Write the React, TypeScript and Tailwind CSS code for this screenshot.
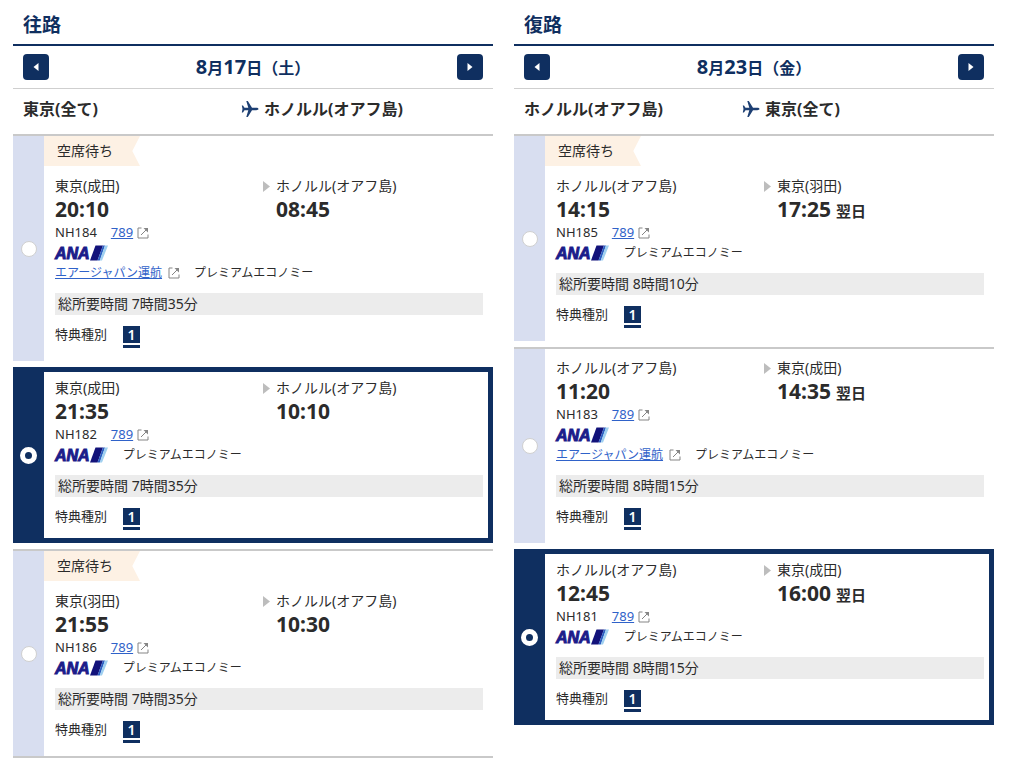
import { useState } from "react";

type Flight = {
  no: string;
  waitlist?: boolean;
  from: string;
  dep: string;
  to: string;
  arr: string;
  nextDay?: boolean;
  operator?: string;
  duration: string;
};

type Leg = {
  title: string;
  date: [string, string, string];
  from: string;
  to: string;
  flights: Flight[];
  initial: string;
  closed?: boolean;
};

const HNL = "ホノルル(オアフ島)";

const legs: Leg[] = [
  {
    title: "往路",
    date: ["8", "17", "土"],
    from: "東京(全て)",
    to: HNL,
    initial: "NH182",
    closed: true,
    flights: [
      { no: "NH184", waitlist: true, from: "東京(成田)", dep: "20:10", to: HNL, arr: "08:45", operator: "エアージャパン運航", duration: "7時間35分" },
      { no: "NH182", from: "東京(成田)", dep: "21:35", to: HNL, arr: "10:10", duration: "7時間35分" },
      { no: "NH186", waitlist: true, from: "東京(羽田)", dep: "21:55", to: HNL, arr: "10:30", duration: "7時間35分" },
    ],
  },
  {
    title: "復路",
    date: ["8", "23", "金"],
    from: HNL,
    to: "東京(全て)",
    initial: "NH181",
    flights: [
      { no: "NH185", waitlist: true, from: HNL, dep: "14:15", to: "東京(羽田)", arr: "17:25", nextDay: true, duration: "8時間10分" },
      { no: "NH183", from: HNL, dep: "11:20", to: "東京(成田)", arr: "14:35", nextDay: true, operator: "エアージャパン運航", duration: "8時間15分" },
      { no: "NH181", from: HNL, dep: "12:45", to: "東京(成田)", arr: "16:00", nextDay: true, duration: "8時間15分" },
    ],
  },
];

function ExternalIcon() {
  return (
    <svg className="size-3 shrink-0" viewBox="0 0 12 12" fill="none" stroke="#858585" aria-hidden="true">
      <path d="M4.500 1H1v10h10V7.500M4 8l5-5" />
      <path d="M6.500 1H11v4.500z" fill="#858585" stroke="none" />
    </svg>
  );
}

function Plane() {
  return (
    <svg className="size-[18px] shrink-0" viewBox="0 0 18 18" fill="#1d3f73" aria-hidden="true">
      <path d="M17.500 9c0-.7-1-1.200-2.300-1.200H11L6.800 1H5.300l2 6.800H3.500L2 5.500H.8L1.500 9 .8 12.500H2l1.500-2.300h3.800l-2 6.800h1.500L11 10.200h4.200c1.300 0 2.300-.5 2.300-1.200z" />
    </svg>
  );
}

function AnaLogo() {
  return (
    <span className="flex h-4 items-end">
      <span className="font-['Liberation_Sans',sans-serif] text-base leading-[14px] font-bold text-[#1c1c8a] italic [-webkit-text-stroke:1px_#1c1c8a]">ANA</span>
      <svg className="h-4 w-[18px]" viewBox="0 0 18 16" aria-hidden="true">
        <path d="M0 15.500L5.500 .5H13L7.500 15.500z" fill="#12127a" />
        <path d="M7.500 15.500L13 .5h2L9.800 15.500z" fill="#2c5fc2" />
        <path d="M9.800 15.500L15 .5h3L12 15.500z" fill="#9fd0f0" />
      </svg>
    </span>
  );
}

function NavButton({ label, next = false }: { label: string; next?: boolean }) {
  return (
    <button type="button" aria-label={label} className="flex size-[26px] items-center justify-center rounded bg-[#0f2f60]">
      <svg className="size-2" viewBox="0 0 8 8" fill="#fff" aria-hidden="true">
        <path d={next ? "M1.500 0L6.500 4 1.500 8z" : "M6.500 0L1.500 4l5 4z"} />
      </svg>
    </button>
  );
}

function FlightCard({ flight, group, selected, onSelect }: { flight: Flight; group: string; selected: boolean; onSelect: () => void }) {
  const cabin = <span className="text-xs">プレミアムエコノミー</span>;
  return (
    <li className={selected ? "flex border-[5px] border-[#0f2f60]" : "flex border-t-2 border-[#c9c9c9]"}>
      <label className={selected ? "flex w-[26px] shrink-0 items-center justify-center bg-[#0f2f60] pr-[5px]" : "flex w-[31px] shrink-0 items-center justify-center bg-[#d8def0]"}>
        <input
          type="radio"
          name={group}
          aria-label={flight.no}
          checked={selected}
          onChange={onSelect}
          className="size-4 shrink-0 appearance-none rounded-full border border-[#d0d0d0] bg-white checked:size-[17px] checked:border-[5px] checked:border-white checked:bg-[#0f2f60]"
        />
      </label>
      <div className={selected ? "min-w-0 flex-1 pt-[6px] pb-2" : "min-w-0 flex-1 pb-[13px]"}>
        {flight.waitlist && (
          <div className="mb-[10px] flex h-[30px] w-24 items-center bg-[#fdf1e4] pl-[13px] text-sm [clip-path:polygon(0_0,100%_0,92%_50%,100%_100%,0_100%)]">
            空席待ち
          </div>
        )}
        <div className={selected ? "pr-[5px] pl-[11px]" : flight.waitlist ? "pr-[10px] pl-[11px]" : "pt-[9px] pr-[10px] pl-[11px]"}>
          <div className="grid grid-cols-[208fr_220fr]">
            <div>
              <p className="text-sm leading-5">{flight.from}</p>
              <p className="text-[21px] leading-[26px] font-bold">{flight.dep}</p>
            </div>
            <div className="flex gap-[6px]">
              <svg className="mt-[5px] h-[11px] w-[7px] shrink-0" viewBox="0 0 7 11" fill="#bdbdbd" aria-hidden="true">
                <path d="M0 0l7 5.500L0 11z" />
              </svg>
              <div>
                <p className="text-sm leading-5">{flight.to}</p>
                <p className="flex h-[26px] items-baseline gap-[5px] text-[21px] leading-[26px] font-bold">
                  {flight.arr}
                  {flight.nextDay && <span className="text-[15px] leading-5">翌日</span>}
                </p>
              </div>
            </div>
          </div>
          <div className="flex h-[21px] items-center">
            <span>{flight.no}</span>
            <a href="#789" className="mr-1 ml-[14px] text-[#2f62c9] underline">789</a>
            <ExternalIcon />
          </div>
          <div className="flex h-5 items-center gap-[15px]">
            <AnaLogo />
            {!flight.operator && cabin}
          </div>
          {flight.operator && (
            <div className="flex h-5 items-center">
              <a href="#operator" className="mr-[6px] text-xs text-[#2f62c9] underline">{flight.operator}</a>
              <ExternalIcon />
              <span className="ml-[14px] flex">{cabin}</span>
            </div>
          )}
          <p className="mt-[10px] bg-[#ececec] pl-[3px] text-sm leading-[22px]">総所要時間 {flight.duration}</p>
          <div className="mt-[11px] flex h-[22px] gap-4">
            <span className="leading-4">特典種別</span>
            <span className="flex h-[22px] w-[17px] flex-col justify-between">
              <span className="h-[17px] bg-[#0f2f60] text-center text-sm leading-[17px] font-semibold text-white">1</span>
              <span className="h-[3px] bg-[#0f2f60]" />
            </span>
          </div>
        </div>
      </div>
    </li>
  );
}

function LegColumn({ leg }: { leg: Leg }) {
  const [selected, setSelected] = useState(leg.initial);
  const [month, day, weekday] = leg.date;
  return (
    <section>
      <h2 className="border-b-2 border-[#0f2f60] pt-3 pb-[6px] pl-[10px] text-[19px] leading-[26px] font-bold text-[#0f2f60]">{leg.title}</h2>
      <div className="flex h-[43px] items-center justify-between border-b border-[#cfcfcf] px-[10px]">
        <NavButton label="前日" />
        <p className="text-base leading-[26px] font-bold text-[#0f2f60]">
          <span className="text-xl leading-[26px]">{month}</span>月<span className="text-xl leading-[26px]">{day}</span>日（{weekday}）
        </p>
        <NavButton label="翌日" next />
      </div>
      <div className="grid h-[45px] grid-cols-[218fr_242fr] items-center px-[10px] pb-[6px] text-base font-bold">
        <span>{leg.from}</span>
        <span className="flex items-center gap-[5px]">
          <Plane />
          {leg.to}
        </span>
      </div>
      <ul className={leg.closed ? "flex flex-col gap-[6px] border-b-2 border-[#c9c9c9]" : "flex flex-col gap-[6px]"}>
        {leg.flights.map((f) => (
          <FlightCard key={f.no} flight={f} group={leg.title} selected={selected === f.no} onSelect={() => setSelected(f.no)} />
        ))}
      </ul>
    </section>
  );
}

export default function App() {
  return (
    <main lang="ja" className="grid grid-cols-2 items-start gap-[21px] bg-white pr-[30px] pb-2 pl-[13px] font-['Noto_Sans','Noto_Sans_CJK_JP',sans-serif] text-[13px] text-[#2b2b2b]">
      {legs.map((leg) => (
        <LegColumn key={leg.title} leg={leg} />
      ))}
    </main>
  );
}
